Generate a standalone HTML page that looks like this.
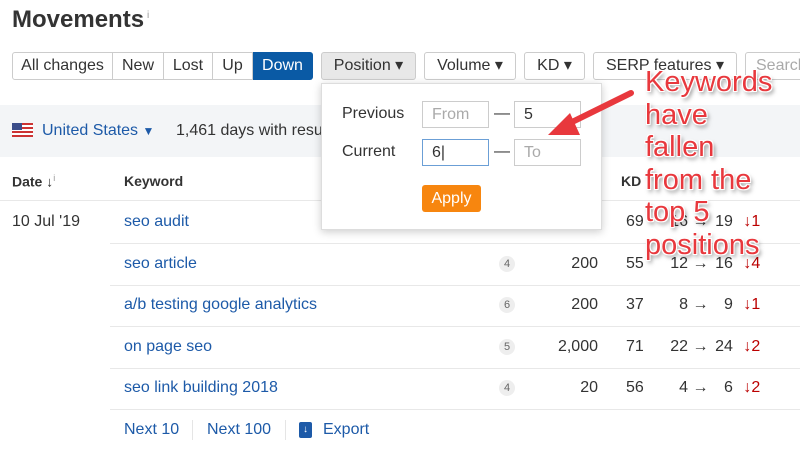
<!DOCTYPE html><html><head><style>
body{margin:0;width:800px;height:453px;overflow:hidden;background:#fff;font-family:"Liberation Sans",sans-serif;color:#333;position:relative}
.a{position:absolute;white-space:nowrap}
.btn{position:absolute;top:52px;height:26px;border:1px solid #ccc;border-radius:3px;font-size:16px;line-height:26px;box-sizing:border-box;height:28px;text-align:center;background:#fff}
.seg{position:absolute;top:52px;height:28px;box-sizing:border-box;border:1px solid #ccc;border-left:none;font-size:16px;line-height:26px;text-align:center}
.kw{color:#1d5aa8;font-size:16px}
.line{position:absolute;left:110px;right:0;height:1px;background:#e8e8e8}
.badge{position:absolute;width:16px;height:16px;border-radius:8px;background:#eee;font-size:11px;line-height:16px;text-align:center;color:#666}
.r{text-align:right}
.inp{position:absolute;width:67px;height:27px;box-sizing:border-box;border:1px solid #ccc;font-size:16px;line-height:25px;padding-left:9px}
.ann{position:absolute;left:645px;top:66px;font-size:29px;line-height:32.5px;color:#e8383d;text-shadow:0 0 2px #fff,1px 1px 0 #fff,-1px -1px 0 #fff,1px -1px 0 #fff,-1px 1px 0 #fff,2px 3px 4px rgba(0,0,0,.5)}
</style></head><body>
<div class="a" style="left:12px;top:6px;font-size:24px;font-weight:bold;color:#333">Movements<sup style="font-size:10px;font-weight:normal;color:#999;margin-left:3px">i</sup></div>
<div class="seg" style="left:12px;width:101px;border-left:1px solid #ccc;border-radius:3px 0 0 3px">All changes</div>
<div class="seg" style="left:113px;width:51px">New</div>
<div class="seg" style="left:164px;width:49px">Lost</div>
<div class="seg" style="left:213px;width:40px">Up</div>
<div class="seg" style="left:253px;width:60px;background:#0a5aa5;color:#fff;border-color:#0a5aa5;border-radius:0 3px 3px 0">Down</div>
<div class="btn" style="left:321px;width:95px;background:#e8e8e8">Position ▾</div>
<div class="btn" style="left:424px;width:92px">Volume ▾</div>
<div class="btn" style="left:524px;width:61px">KD ▾</div>
<div class="btn" style="left:593px;width:144px">SERP features ▾</div>
<div class="btn" style="left:745px;width:70px;text-align:left;padding-left:10px;color:#aaa">Search</div>
<div class="a" style="left:0;top:105px;width:800px;height:52px;background:#f3f5f7"></div>
<svg class="a" style="left:12px;top:123px" width="21" height="14"><rect width="21" height="14" fill="#fff"/><g fill="#c33"><rect y="0" width="21" height="2"/><rect y="4" width="21" height="2"/><rect y="8" width="21" height="2"/><rect y="12" width="21" height="2"/></g><rect width="10" height="7" fill="#3b4d8a"/></svg>
<div class="a" style="left:42px;top:122px;font-size:16px;color:#1d5aa8">United States <span style="font-size:12px">▼</span></div>
<div class="a" style="left:176px;top:122px;font-size:16px;color:#333">1,461 days with results</div>
<div class="a" style="left:12px;top:173px;font-size:14px;font-weight:bold">Date ↓<sup style="font-size:9px;font-weight:normal;color:#999">i</sup></div>
<div class="a" style="left:124px;top:173px;font-size:14px;font-weight:bold">Keyword</div>
<div class="a" style="left:621px;top:173px;font-size:14px;font-weight:bold">KD</div>
<div class="a" style="left:0;top:200px;width:800px;height:1px;background:#e8e8e8"></div>
<div class="a" style="left:12px;top:213px;font-size:16px">10 Jul '19</div>
<div class="line" style="top:243px"></div><div class="line" style="top:285px"></div><div class="line" style="top:326px"></div><div class="line" style="top:368px"></div><div class="line" style="top:409px"></div>
<div class="a kw" style="left:124px;top:213px">seo audit</div>
<div class="a kw" style="left:124px;top:255px">seo article</div>
<div class="a kw" style="left:124px;top:296px">a/b testing google analytics</div>
<div class="a kw" style="left:124px;top:338px">on page seo</div>
<div class="a kw" style="left:124px;top:379px">seo link building 2018</div>
<div class="badge" style="left:499px;top:256px">4</div><div class="badge" style="left:499px;top:297px">6</div><div class="badge" style="left:499px;top:339px">5</div><div class="badge" style="left:499px;top:380px">4</div>
<div class="a r" style="left:540px;width:58px;top:255px;font-size:16px">200</div>
<div class="a r" style="left:540px;width:58px;top:296px;font-size:16px">200</div>
<div class="a r" style="left:540px;width:58px;top:338px;font-size:16px">2,000</div>
<div class="a r" style="left:540px;width:58px;top:379px;font-size:16px">20</div>
<div class="a" style="left:626px;top:213px;font-size:16px">69</div>
<div class="a" style="left:626px;top:255px;font-size:16px">55</div>
<div class="a" style="left:626px;top:296px;font-size:16px">37</div>
<div class="a" style="left:626px;top:338px;font-size:16px">71</div>
<div class="a" style="left:626px;top:379px;font-size:16px">56</div>
<div class="a" style="left:650px;top:213px;font-size:16px;width:120px"><span style="display:inline-block;width:38px;text-align:right">16</span> → <span style="display:inline-block;width:20px;text-align:right">19</span> <span style="color:#b00;margin-left:6px">↓1</span></div>
<div class="a" style="left:650px;top:255px;font-size:16px;width:120px"><span style="display:inline-block;width:38px;text-align:right">12</span> → <span style="display:inline-block;width:20px;text-align:right">16</span> <span style="color:#b00;margin-left:6px">↓4</span></div>
<div class="a" style="left:650px;top:296px;font-size:16px;width:120px"><span style="display:inline-block;width:38px;text-align:right">8</span> → <span style="display:inline-block;width:20px;text-align:right">9</span> <span style="color:#b00;margin-left:6px">↓1</span></div>
<div class="a" style="left:650px;top:338px;font-size:16px;width:120px"><span style="display:inline-block;width:38px;text-align:right">22</span> → <span style="display:inline-block;width:20px;text-align:right">24</span> <span style="color:#b00;margin-left:6px">↓2</span></div>
<div class="a" style="left:650px;top:379px;font-size:16px;width:120px"><span style="display:inline-block;width:38px;text-align:right">4</span> → <span style="display:inline-block;width:20px;text-align:right">6</span> <span style="color:#b00;margin-left:6px">↓2</span></div>
<div class="a kw" style="left:124px;top:421px">Next 10</div>
<div class="a" style="left:192px;top:420px;width:1px;height:20px;background:#e5e5e5"></div>
<div class="a kw" style="left:207px;top:421px">Next 100</div>
<div class="a" style="left:285px;top:420px;width:1px;height:20px;background:#e5e5e5"></div>
<div class="a" style="left:299px;top:422px;width:13px;height:16px;background:#1d5aa8;border-radius:2px;color:#fff;font-size:10px;text-align:center;line-height:16px">↓</div>
<div class="a kw" style="left:323px;top:421px">Export</div>
<div class="a" style="left:321px;top:83px;width:281px;height:147px;background:#fff;border:1px solid #ddd;box-sizing:border-box;box-shadow:0 2px 8px rgba(0,0,0,.2)"></div>
<div class="a" style="left:342px;top:105px;font-size:16px">Previous</div>
<div class="a" style="left:342px;top:143px;font-size:16px">Current</div>
<div class="inp" style="left:422px;top:101px;color:#aaa">From</div>
<div class="a" style="left:494px;top:105px;font-size:16px">—</div>
<div class="inp" style="left:514px;top:101px">5</div>
<div class="inp" style="left:422px;top:139px;border-color:#6b9fd6">6|</div>
<div class="a" style="left:494px;top:143px;font-size:16px">—</div>
<div class="inp" style="left:514px;top:139px;color:#aaa">To</div>
<div class="a" style="left:422px;top:185px;width:59px;height:27px;background:#f7860f;border-radius:3px;color:#fff;font-size:16px;text-align:center;line-height:27px">Apply</div>
<svg class="a" style="left:540px;top:85px" width="100" height="60"><line x1="91" y1="8" x2="22" y2="42" stroke="#e8383d" stroke-width="6" stroke-linecap="round"/><polygon points="8,50 30,28 40,50" fill="#e8383d"/></svg>
<div class="ann">Keywords<br>have<br>fallen<br>from the<br>top 5<br>positions</div>
</body></html>
